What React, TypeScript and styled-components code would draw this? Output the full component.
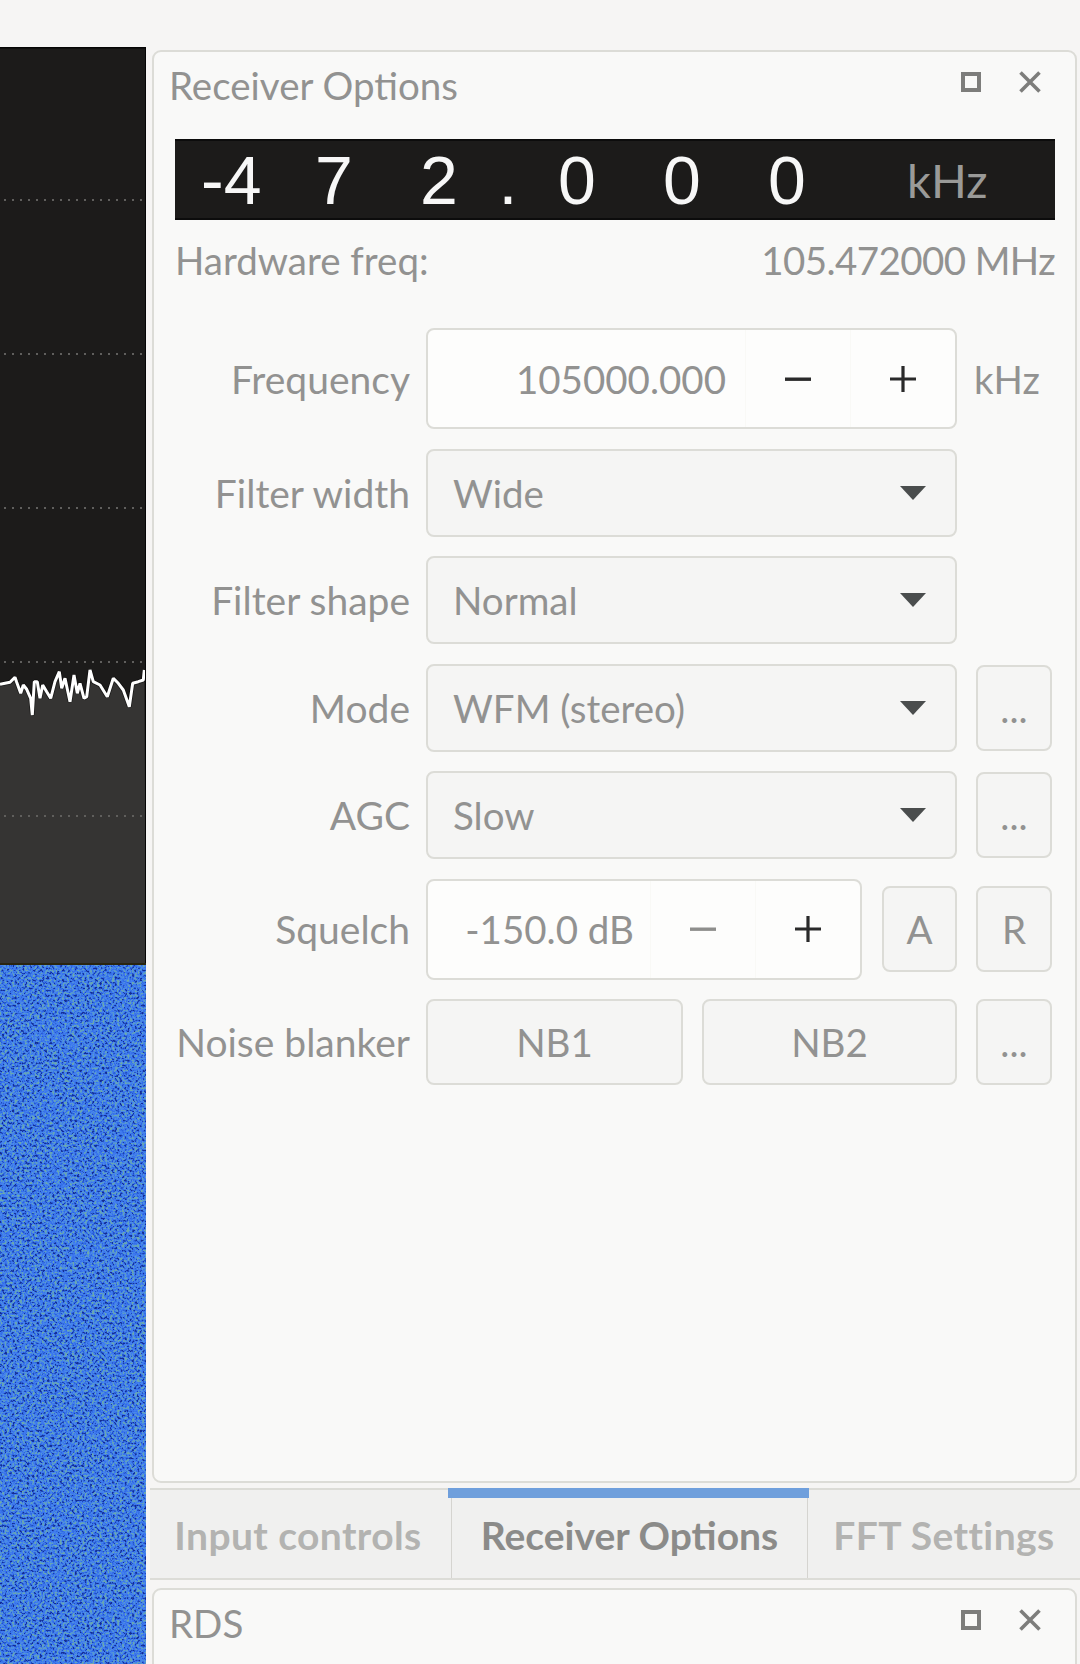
import React from "react";
import styled, { createGlobalStyle } from "styled-components";

const Global = createGlobalStyle`
  html, body { margin: 0; padding: 0; background: #f6f5f4; }
  * { box-sizing: border-box; }
`;

const FONT = `Lato, "Noto Sans", sans-serif`;
const TEXT = "#929291";
const LINE = "#dcdcd7";

const Page = styled.div`
  display: flex;
  width: 1080px;
  height: 1664px;
  overflow: hidden;
  background: #f6f5f4;
  font-family: ${FONT};
  color: ${TEXT};
`;

const LeftColumn = styled.div`
  width: 146px;
  flex: none;
  display: flex;
  flex-direction: column;
  padding-top: 47px;
`;

const SpectrumSvg = styled.svg`
  display: block;
  width: 146px;
  height: 918px;
  flex: none;
`;

const WaterfallSvg = styled.svg`
  display: block;
  width: 146px;
  flex: 1;
  min-height: 0;
`;

const RightColumn = styled.div`
  flex: 1;
  display: flex;
  flex-direction: column;
  padding: 50px 0 0 4px;
  min-width: 0;
`;

const DockPanel = styled.section<{ $main?: boolean }>`
  margin: 0 3px 0 2px;
  background: #f9f9f8;
  border: 2px solid ${LINE};
  border-radius: 9px;
  flex: none;
  height: ${(p) => (p.$main ? "1433px" : "120px")};
  display: flex;
  flex-direction: column;
`;

const PanelHeader = styled.header`
  height: 70px;
  flex: none;
  display: flex;
  align-items: center;
  padding: 0 33px 0 15px;
`;

const PanelTitle = styled.h2`
  margin: 0 0 4px;
  flex: 1;
  font-size: 38.5px;
  font-weight: 400;
  color: ${TEXT};
`;

const HeaderIcons = styled.div`
  display: flex;
  align-items: center;
  gap: 37px;
  margin-bottom: 10px;
`;

const PanelBody = styled.div`
  padding: 17px 20px 0 21px;
  display: flex;
  flex-direction: column;
`;

const FreqDisplay = styled.div`
  height: 81px;
  background: #1c1b1a;
  display: flex;
  align-items: center;
  padding-left: 1.5px;
  border-top: 2px solid #0c0c0c;
  border-bottom: 2px solid #0c0c0c;
`;

const Digit = styled.span<{ $w?: number; $end?: boolean }>`
  width: ${(p) => p.$w ?? 105}px;
  flex: none;
  display: flex;
  justify-content: ${(p) => (p.$end ? "flex-end" : "center")};
  padding-right: ${(p) => (p.$end ? "20px" : "0")};
  font-family: "Liberation Sans", sans-serif;
  font-size: 68px;
  line-height: 1;
  color: #f7f7f7;
`;

const DisplayUnit = styled.span`
  flex: 1;
  text-align: center;
  font-size: 47px;
  color: #9a9a98;
`;

const HardwareRow = styled.div`
  display: flex;
  justify-content: space-between;
  align-items: center;
  height: 41px;
  margin: 19px 0 48px;
  font-size: 38.5px;
`;

const HardwareValue = styled.span`
  letter-spacing: -0.6px;
`;

const Form = styled.div`
  display: flex;
  flex-direction: column;
  gap: 19.5px;
`;

const Row = styled.div`
  display: flex;
  align-items: center;
`;

const Label = styled.label`
  width: 235px;
  flex: none;
  margin-right: 16px;
  text-align: right;
  font-size: 39px;
  white-space: nowrap;
`;

const SpinBox = styled.div<{ $w: number }>`
  width: ${(p) => p.$w}px;
  height: 101px;
  flex: none;
  display: flex;
  background: #fdfdfc;
  border: 2px solid ${LINE};
  border-radius: 8px;
`;

const SpinValue = styled.span<{ $pad: number }>`
  flex: 1;
  display: flex;
  align-items: center;
  justify-content: flex-end;
  padding-right: ${(p) => p.$pad}px;
  font-size: 38.5px;
`;

const SpinButton = styled.span`
  width: 105px;
  flex: none;
  display: flex;
  align-items: center;
  justify-content: center;
  border-left: 1px solid #f9f9f6;
`;

const UnitLabel = styled.span`
  margin-left: 17px;
  font-size: 38.5px;
`;

const Combo = styled.div`
  width: 531px;
  height: 88px;
  flex: none;
  display: flex;
  align-items: center;
  justify-content: space-between;
  padding: 0 29px 0 25px;
  background: #f5f5f4;
  border: 2px solid ${LINE};
  border-radius: 8px;
  font-size: 38.5px;
`;

const Button = styled.button<{ $w: number; $ml?: number }>`
  width: ${(p) => p.$w}px;
  height: 86px;
  flex: none;
  margin-left: ${(p) => p.$ml ?? 0}px;
  padding: 0;
  background: #f5f5f4;
  border: 2px solid ${LINE};
  border-radius: 8px;
  font-family: ${FONT};
  font-size: 38.5px;
  color: ${TEXT};
`;

const TabStrip = styled.nav`
  height: 92px;
  flex: none;
  margin: 5px 0 8px;
  display: flex;
  background: #f0f0ef;
  border-top: 2px solid ${LINE};
  border-bottom: 2px solid ${LINE};
`;

const Tab = styled.div<{ $w: number; $active?: boolean }>`
  position: relative;
  width: ${(p) => p.$w}px;
  flex: none;
  display: flex;
  align-items: center;
  padding-top: 2px;
  justify-content: center;
  border-left: ${(p) => (p.$active ? "1px solid #d5d4d0" : "none")};
  border-right: ${(p) => (p.$active ? "1px solid #d5d4d0" : "none")};
  font-size: 39px;
  font-weight: 700;
  letter-spacing: ${(p) => (p.$active ? "0" : "0.4px")};
  color: ${(p) => (p.$active ? "#8b8b89" : "#b3b3b1")};
  white-space: nowrap;
`;

const FirstTabLabel = styled.span`
  margin-right: 5px;
`;

const TabMarker = styled.span`
  position: absolute;
  left: -4px;
  right: -2px;
  top: -2px;
  height: 10px;
  background: #6f9fdc;
`;

const TRACE: [number, number][] = [
  [0, 103], [15, 100], [30, 97], [45, 82], [50, 97], [62, 130], [70, 105], [80, 118],
  [92, 145], [97, 195], [103, 95], [112, 95], [120, 145], [128, 105], [140, 125],
  [152, 145], [165, 95], [178, 65], [185, 115], [195, 85], [210, 155], [222, 75],
  [232, 130], [240, 100], [252, 145], [260, 140], [270, 60], [280, 95], [300, 105],
  [322, 140], [340, 85], [355, 100], [370, 120], [388, 170], [398, 100], [415, 95],
  [430, 90], [433, 60],
];
const tracePoints = TRACE.map(([x, y]) => `${(x / 3).toFixed(1)},${(650 + y / 3 - 47).toFixed(1)}`).join(" ");

const Spectrum = () => (
  <SpectrumSvg viewBox="0 0 146 918">
    <rect width="146" height="918" fill="#1c1b1a" />
    <polygon points={`0,918 ${tracePoints} 146,918`} fill="#353433" />
    {[153, 307, 461, 615, 769].map((y) => (
      <line key={y} x1="4" x2="146" y1={y} y2={y} stroke="#605f5d" strokeWidth="2" strokeDasharray="2 6" />
    ))}
    <polyline points={tracePoints} fill="none" stroke="#000" strokeWidth="4.6" opacity=".5" strokeLinejoin="bevel" />
    <polyline points={tracePoints} fill="none" stroke="#fff" strokeWidth="3" strokeLinejoin="bevel" />
    <rect y="0" width="146" height="1.5" fill="#050505" />
    <rect x="145" width="1" height="918" fill="#050505" />
    <rect y="916" width="146" height="2" fill="#2a2510" />
  </SpectrumSvg>
);

const Waterfall = () => (
  <WaterfallSvg viewBox="0 0 146 699" preserveAspectRatio="none">
    <filter id="wf" x="0" y="0" width="100%" height="100%" colorInterpolationFilters="sRGB">
      <feTurbulence type="fractalNoise" baseFrequency="0.4" numOctaves="3" seed="7" />
      <feColorMatrix values="2.3 0 0 0 -0.62 2.3 0 0 0 -0.62 2.3 0 0 0 -0.62 0 0 0 0 1" />
      <feComponentTransfer>
        <feFuncR type="table" tableValues="0.08 0.13 0.2 0.24 0.28 0.34 0.42" />
        <feFuncG type="table" tableValues="0.18 0.3 0.43 0.47 0.53 0.6 0.66" />
        <feFuncB type="table" tableValues="0.58 0.74 0.9 0.94 0.92 0.82 0.68" />
      </feComponentTransfer>
    </filter>
    <rect width="146" height="699" fill="#2f66e6" filter="url(#wf)" />
  </WaterfallSvg>
);

const RestoreIcon = () => (
  <svg width="20" height="20" viewBox="0 0 20 20">
    <rect x="2" y="2" width="16" height="16" fill="none" stroke="#7d7d7b" strokeWidth="4" />
  </svg>
);
const CloseIcon = () => (
  <svg width="24" height="24" viewBox="0 0 24 24">
    <path d="M2.5 2.5 21.5 21.5M21.5 2.5 2.5 21.5" fill="none" stroke="#7d7d7b" strokeWidth="3.6" />
  </svg>
);
const MinusIcon = ({ color }: { color: string }) => (
  <svg width="26" height="26" viewBox="0 0 26 26">
    <rect y="11.5" width="26" height="3.4" fill={color} />
  </svg>
);
const PlusIcon = () => (
  <svg width="26" height="26" viewBox="0 0 26 26">
    <path d="M0 13H26M13 0V26" fill="none" stroke="#2a2a2a" strokeWidth="3.2" />
  </svg>
);
const Arrow = () => (
  <svg width="26" height="14" viewBox="0 0 26 14">
    <path d="M0 0H26L13 14Z" fill="#4a4d4d" />
  </svg>
);

const ComboField = ({ value }: { value: string }) => (
  <Combo>
    <span>{value}</span>
    <Arrow />
  </Combo>
);

export default function App() {
  return (
    <Page>
      <Global />
      <LeftColumn>
        <Spectrum />
        <Waterfall />
      </LeftColumn>
      <RightColumn>
        <DockPanel $main>
          <PanelHeader>
            <PanelTitle>Receiver Options</PanelTitle>
            <HeaderIcons>
              <RestoreIcon />
              <CloseIcon />
            </HeaderIcons>
          </PanelHeader>
          <PanelBody>
            <FreqDisplay>
              <Digit $end>-4</Digit>
              <Digit>7</Digit>
              <Digit>2</Digit>
              <Digit $w={33}>.</Digit>
              <Digit>0</Digit>
              <Digit>0</Digit>
              <Digit>0</Digit>
              <DisplayUnit>kHz</DisplayUnit>
            </FreqDisplay>
            <HardwareRow>
              <span>Hardware freq:</span>
              <HardwareValue>105.472000 MHz</HardwareValue>
            </HardwareRow>
            <Form>
              <Row>
                <Label>Frequency</Label>
                <SpinBox $w={531}>
                  <SpinValue $pad={19}>105000.000</SpinValue>
                  <SpinButton><MinusIcon color="#2a2a2a" /></SpinButton>
                  <SpinButton><PlusIcon /></SpinButton>
                </SpinBox>
                <UnitLabel>kHz</UnitLabel>
              </Row>
              <Row>
                <Label>Filter width</Label>
                <ComboField value="Wide" />
              </Row>
              <Row>
                <Label>Filter shape</Label>
                <ComboField value="Normal" />
              </Row>
              <Row>
                <Label>Mode</Label>
                <ComboField value="WFM (stereo)" />
                <Button $w={76} $ml={19}>...</Button>
              </Row>
              <Row>
                <Label>AGC</Label>
                <ComboField value="Slow" />
                <Button $w={76} $ml={19}>...</Button>
              </Row>
              <Row>
                <Label>Squelch</Label>
                <SpinBox $w={436}>
                  <SpinValue $pad={16}>-150.0 dB</SpinValue>
                  <SpinButton><MinusIcon color="#8e8e8c" /></SpinButton>
                  <SpinButton><PlusIcon /></SpinButton>
                </SpinBox>
                <Button $w={75} $ml={20}>A</Button>
                <Button $w={76} $ml={19}>R</Button>
              </Row>
              <Row>
                <Label>Noise blanker</Label>
                <Button $w={257}>NB1</Button>
                <Button $w={255} $ml={19}>NB2</Button>
                <Button $w={76} $ml={19}>...</Button>
              </Row>
            </Form>
          </PanelBody>
        </DockPanel>
        <TabStrip>
          <Tab $w={301}><FirstTabLabel>Input controls</FirstTabLabel></Tab>
          <Tab $w={357} $active>
            <TabMarker />
            Receiver Options
          </Tab>
          <Tab $w={272}>FFT Settings</Tab>
        </TabStrip>
        <DockPanel>
          <PanelHeader>
            <PanelTitle>RDS</PanelTitle>
            <HeaderIcons>
              <RestoreIcon />
              <CloseIcon />
            </HeaderIcons>
          </PanelHeader>
        </DockPanel>
      </RightColumn>
    </Page>
  );
}
